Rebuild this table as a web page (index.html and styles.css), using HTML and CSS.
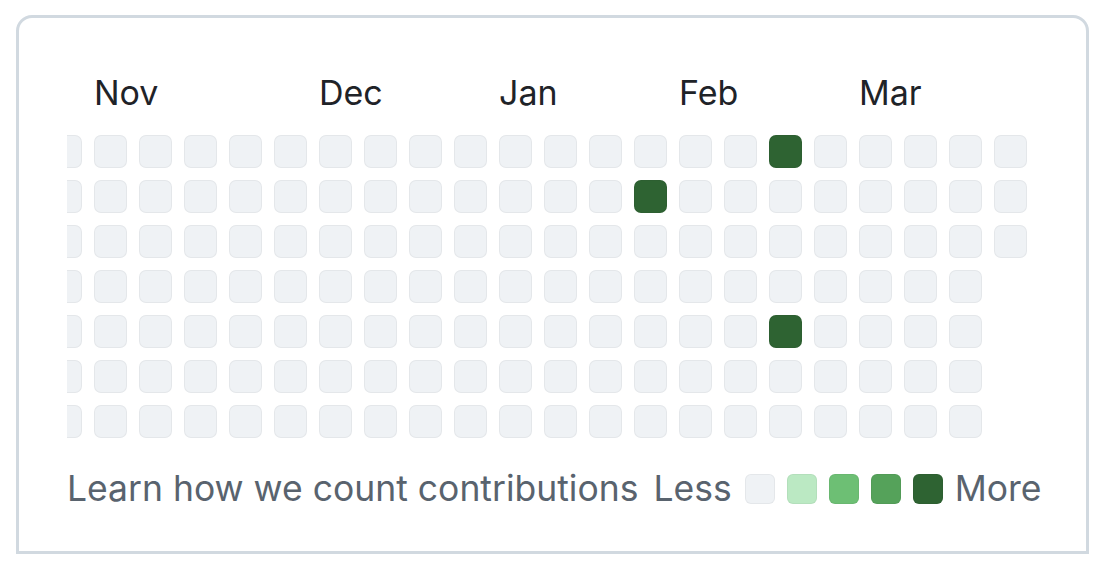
FILE: index.html
```html
<!DOCTYPE html>
<html lang="en">
<head>
<meta charset="utf-8">
<title>Contributions</title>
<link rel="stylesheet" href="styles.css">
</head>
<body>
<div class="card">
  <div class="graph">
    <div class="viewport">
      <div class="months">
        <span class="month m-nov">Nov</span>
        <span class="month m-dec">Dec</span>
        <span class="month m-jan">Jan</span>
        <span class="month m-feb">Feb</span>
        <span class="month m-mar">Mar</span>
      </div>
      <div class="days">
        <!-- col 1 -->
        <i class="day"></i><i class="day"></i><i class="day"></i><i class="day"></i><i class="day"></i><i class="day"></i><i class="day"></i>
        <!-- col 2 -->
        <i class="day"></i><i class="day"></i><i class="day"></i><i class="day"></i><i class="day"></i><i class="day"></i><i class="day"></i>
        <!-- col 3 -->
        <i class="day"></i><i class="day"></i><i class="day"></i><i class="day"></i><i class="day"></i><i class="day"></i><i class="day"></i>
        <!-- col 4 -->
        <i class="day"></i><i class="day"></i><i class="day"></i><i class="day"></i><i class="day"></i><i class="day"></i><i class="day"></i>
        <!-- col 5 -->
        <i class="day"></i><i class="day"></i><i class="day"></i><i class="day"></i><i class="day"></i><i class="day"></i><i class="day"></i>
        <!-- col 6 -->
        <i class="day"></i><i class="day"></i><i class="day"></i><i class="day"></i><i class="day"></i><i class="day"></i><i class="day"></i>
        <!-- col 7 -->
        <i class="day"></i><i class="day"></i><i class="day"></i><i class="day"></i><i class="day"></i><i class="day"></i><i class="day"></i>
        <!-- col 8 -->
        <i class="day"></i><i class="day"></i><i class="day"></i><i class="day"></i><i class="day"></i><i class="day"></i><i class="day"></i>
        <!-- col 9 -->
        <i class="day"></i><i class="day"></i><i class="day"></i><i class="day"></i><i class="day"></i><i class="day"></i><i class="day"></i>
        <!-- col 10 -->
        <i class="day"></i><i class="day"></i><i class="day"></i><i class="day"></i><i class="day"></i><i class="day"></i><i class="day"></i>
        <!-- col 11 -->
        <i class="day"></i><i class="day"></i><i class="day"></i><i class="day"></i><i class="day"></i><i class="day"></i><i class="day"></i>
        <!-- col 12 -->
        <i class="day"></i><i class="day"></i><i class="day"></i><i class="day"></i><i class="day"></i><i class="day"></i><i class="day"></i>
        <!-- col 13 -->
        <i class="day"></i><i class="day"></i><i class="day"></i><i class="day"></i><i class="day"></i><i class="day"></i><i class="day"></i>
        <!-- col 14 -->
        <i class="day"></i><i class="day l4"></i><i class="day"></i><i class="day"></i><i class="day"></i><i class="day"></i><i class="day"></i>
        <!-- col 15 -->
        <i class="day"></i><i class="day"></i><i class="day"></i><i class="day"></i><i class="day"></i><i class="day"></i><i class="day"></i>
        <!-- col 16 -->
        <i class="day"></i><i class="day"></i><i class="day"></i><i class="day"></i><i class="day"></i><i class="day"></i><i class="day"></i>
        <!-- col 17 -->
        <i class="day l4"></i><i class="day"></i><i class="day"></i><i class="day"></i><i class="day l4"></i><i class="day"></i><i class="day"></i>
        <!-- col 18 -->
        <i class="day"></i><i class="day"></i><i class="day"></i><i class="day"></i><i class="day"></i><i class="day"></i><i class="day"></i>
        <!-- col 19 -->
        <i class="day"></i><i class="day"></i><i class="day"></i><i class="day"></i><i class="day"></i><i class="day"></i><i class="day"></i>
        <!-- col 20 -->
        <i class="day"></i><i class="day"></i><i class="day"></i><i class="day"></i><i class="day"></i><i class="day"></i><i class="day"></i>
        <!-- col 21 -->
        <i class="day"></i><i class="day"></i><i class="day"></i><i class="day"></i><i class="day"></i><i class="day"></i><i class="day"></i>
        <!-- col 22 -->
        <i class="day"></i><i class="day"></i><i class="day"></i>
      </div>
    </div>
  </div>
  <div class="footer">
    <a class="learn" href="#">Learn how we count contributions</a>
    <div class="legend">
      <span class="legend-label">Less</span>
      <i class="swatch"></i>
      <i class="swatch l1"></i>
      <i class="swatch l2"></i>
      <i class="swatch l3"></i>
      <i class="swatch l4"></i>
      <span class="legend-label">More</span>
    </div>
  </div>
</div>
</body>
</html>
```

FILE: styles.css
```css
* { box-sizing: border-box; }

html, body {
  margin: 0;
  padding: 0;
  background: #ffffff;
}

body {
  font-family: Inter, "Liberation Sans", sans-serif;
  padding: 15px 0 0 16px;
}

.card {
  width: 1073px;
  height: 539px;
  border: 3px solid #d1d9e0;
  border-radius: 16px 16px 0 0;
  padding: 55px 0 0 48px;
  background: #ffffff;
}

.graph {
  width: 1000px;
}

.viewport {
  overflow: hidden;
  width: 1000px;
}

.months,
.days {
  display: grid;
  grid-template-columns: repeat(22, 33px);
  column-gap: 12px;
  margin-left: -18px;
}

.months {
  height: 40px;
  margin-bottom: 22px;
}

.month {
  font-size: 34px;
  line-height: 40px;
  color: #1f2328;
  white-space: nowrap;
}

.m-nov { grid-column: 2 / span 5; }
.m-dec { grid-column: 7 / span 4; }
.m-jan { grid-column: 11 / span 4; }
.m-feb { grid-column: 15 / span 4; }
.m-mar { grid-column: 19 / span 4; }

.days {
  grid-template-rows: repeat(7, 33px);
  grid-auto-flow: column;
  row-gap: 12px;
}

.day,
.swatch {
  display: block;
  background: #eff2f5;
  border-radius: 7px;
  box-shadow: inset 0 0 0 1px rgba(31, 35, 40, 0.05);
}

.day { width: 33px; height: 33px; }

.swatch {
  width: 30px;
  height: 30px;
  border-radius: 6px;
}

.l1 { background: #bbe9c3; }
.l2 { background: #6dbf74; }
.l3 { background: #55a25a; }
.l4 { background: #2e6332; box-shadow: inset 0 0 0 1px rgba(27, 31, 35, 0.06); }

.footer {
  display: flex;
  align-items: center;
  margin-top: 31px;
  height: 40px;
  font-size: 35.5px;
  line-height: 40px;
  color: #59636e;
}

.learn {
  color: #59636e;
  text-decoration: none;
  white-space: nowrap;
}

.legend {
  display: flex;
  align-items: center;
  gap: 12px;
  margin-left: 15px;
}

.legend-label {
  white-space: nowrap;
}

.legend-label:first-child {
  margin-right: 1px;
}
```
